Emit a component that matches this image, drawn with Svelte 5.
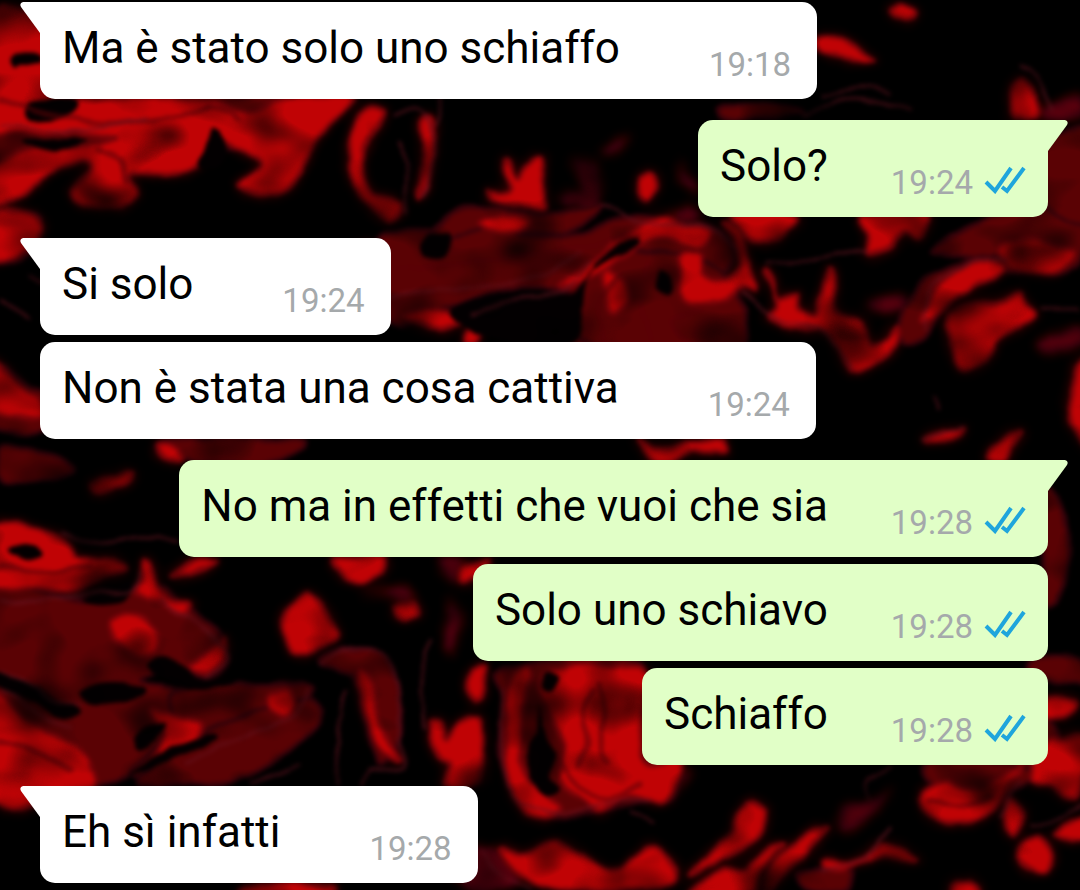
<script lang="ts">
  type Point = [number, number];
  type Message = { text: string; time: string; mine?: boolean };

  const groups: Message[][] = [
    [{ text: 'Ma è stato solo uno schiaffo', time: '19:18' }],
    [{ text: 'Solo?', time: '19:24', mine: true }],
    [
      { text: 'Si solo', time: '19:24' },
      { text: 'Non è stata una cosa cattiva', time: '19:24' },
    ],
    [
      { text: 'No ma in effetti che vuoi che sia', time: '19:28', mine: true },
      { text: 'Solo uno schiavo', time: '19:28', mine: true },
      { text: 'Schiaffo', time: '19:28', mine: true },
    ],
    [{ text: 'Eh sì infatti', time: '19:28' }],
  ];

  // wallpaper: points of each paint blob, smoothed into a curve below
  const deep = [
    '30,98 120,92 250,96 330,98 300,130 230,150 130,165 60,150 0,165 0,120',
    '380,240 430,232 500,228 560,238 640,215 700,225 735,250 720,290 735,330 700,350 570,350 580,300 560,290 500,290 440,312 390,322',
    '470,205 540,215 600,205 560,235 500,228 430,240 440,225',
    '590,345 575,300 600,265 640,250 720,270 740,350',
    '975,225 1050,190 1080,200 1080,262 1030,275 960,255 930,250',
    '1045,150 1090,130 1090,222 1046,205',
    '905,345 900,320 925,280 980,258 1010,262 960,290 930,330',
    '0,447 30,450 60,458 74,472 55,477 20,482 0,478',
    '160,440 300,440 270,462 185,460',
    '-10,600 80,600 150,585 190,610 222,640 225,665 205,676 170,668 140,680 180,690 250,692 310,690 290,715 220,735 170,760 110,782 -10,788',
    '180,690 300,685 310,700 270,745 190,770 130,775 170,730',
    '320,660 350,650 385,656 398,690 400,740 380,762 365,720 355,680',
    '505,668 640,664 645,760 680,770 670,800 640,802 600,812 550,815 515,790 500,755 503,700',
    '930,762 1030,764 1000,800 940,790',
    '1045,490 1066,525 1066,580 1045,605',
    '1030,660 1065,655 1090,665 1090,685 1035,678',
    '720,108 760,103 800,112 780,118 730,119',
    '-10,365 30,385 45,395 45,430 10,432 -10,420',
    '-10,225 20,213 40,220 30,240 35,250 10,262 -10,258',
    '960,700 1050,720 1045,765 960,750',
    '800,872 850,870 845,890 810,890',
    '575,780 620,700 650,690 650,770 600,810',
    '190,740 300,700 320,720 260,770 200,784 140,784',
  ];

  const faint = [
    '570,158 595,165 602,190 590,212 578,200 582,178',
    '600,150 620,140 630,134 622,148 606,156',
    '680,160 690,178 700,192 690,190 680,178',
    '560,195 580,190 582,200 566,206',
    '665,214 690,206 700,216 685,220',
    '1040,340 1080,328 1080,346 1050,350',
    '870,300 905,296 900,312 872,310',
    '450,600 460,620 452,655 446,640',
    '440,560 478,562 470,578 455,585',
    '360,596 398,588 416,600 410,612 390,596',
    '310,270 380,246 384,310 320,320',
    '840,810 870,800 892,790 872,815 845,832',
    '640,770 690,772 676,790 650,796',
    '1042,108 1080,96 1080,116 1046,120',
    '440,850 500,850 520,884 470,888',
  ];

  const bright = [
    '-10,18 38,16 60,60 70,98 130,98 205,100 250,112 285,98 352,98 335,118 312,142 302,168 288,190 270,195 245,190 240,183 262,164 235,148 218,140 208,158 180,172 132,172 138,194 118,206 95,207 73,195 90,172 84,162 50,172 25,192 -10,205 -10,170 28,150 85,146 115,140 80,134 20,133 -10,124',
    '-10,214 20,213 38,222 33,245 -10,260',
    '368,108 385,110 380,122 366,140 362,165 368,188 380,198 400,204 392,220 378,212 358,195 350,170 354,135',
    '421,122 432,120 433,150 428,180 420,196 424,160',
    '508,160 515,178 525,166 542,158 540,185 546,208 530,208 500,203 484,190 508,194 503,172',
    '640,178 652,173 658,185 650,198 640,194 637,186',
    '480,222 510,215 530,222 515,230 490,232',
    '892,12 902,5 914,12 906,20 894,18',
    '819,36 845,42 875,60 845,58 819,50',
    '1013,118 1012,95 1020,80 1030,85 1036,102 1034,118',
    '733,214 792,214 788,232 768,240 745,234',
    '865,214 928,214 918,236 905,230 890,246 868,256 868,235',
    '560,285 590,262 620,240 640,226 660,215 680,222 710,232 698,246 660,238 620,258 590,280',
    '680,258 700,254 705,275 725,282 740,262 735,240 722,224 740,230 748,260 756,290 740,285 725,302 700,304 682,295',
    '605,270 625,285 628,300 615,312 605,295',
    '765,270 772,278 778,298 795,294 800,310 815,316 820,300 826,276 832,270 834,305 845,316 862,322 870,344 885,340 898,328 896,345 880,362 858,370 842,360 838,345 820,330 790,328 768,315 778,304',
    '920,322 930,300 955,272 985,262 1005,266 990,280 965,292 945,310',
    '1000,250 1020,238 1050,242 1074,252 1066,266 1040,275 1015,268',
    '955,312 975,304 1000,302 1020,294 1026,305 1034,316 1015,330 995,342 985,362 962,370 952,350 950,328',
    '1074,372 1090,362 1090,444 1072,420',
    '928,436 965,428 950,440 926,442',
    '988,460 996,444 1022,430 1012,446 1004,460',
    '638,438 660,448 690,444 720,440 724,452 690,452 668,462 650,455',
    '1060,698 1076,704 1070,714 1046,716 1046,698',
    '1046,740 1062,738 1090,742 1078,790 1068,798 1050,786 1030,776',
    '430,312 460,320 445,328 425,326 405,316',
    '465,340 470,325 482,318 478,340',
    '155,442 172,446 180,462 162,456',
    '90,487 115,476 132,474 120,488 100,492',
    '-10,362 20,385 38,398 42,418 20,418 -10,408',
    '-10,526 35,528 68,542 78,558 110,560 125,570 100,578 70,592 30,588 -10,585',
    '145,560 152,565 157,590 175,600 190,602 186,614 165,604 145,600 135,592 143,580',
    '112,622 130,614 146,620 158,640 154,652 136,656 118,642',
    '170,575 200,560 215,562 190,572',
    '-10,695 25,718 60,738 88,762 84,790 -10,800',
    '280,690 290,690 294,704 284,716 270,708 268,696',
    '285,620 296,600 308,594 322,606 338,634 318,648 295,655 286,640',
    '335,560 380,558 382,572 362,584 345,578',
    '396,608 412,602 416,614 404,620',
    '358,672 370,680 378,715 392,745 400,762 378,745 366,712',
    '430,724 440,722 446,740 460,722 480,720 482,762 475,784 445,784 448,764 436,754',
    '472,672 484,668 482,695 474,700 468,688',
    '515,672 530,672 520,735 525,775 545,795 560,808 530,815 508,770 508,710',
    '545,672 640,668 644,700 640,740 650,765 680,762 665,802 630,795 600,812 580,800 560,780 565,745 552,720',
    '500,848 525,855 555,842 590,862 618,870 650,845 675,875 655,888 560,888 520,874',
    '738,812 755,804 766,812 760,835 740,850 700,870 688,874 718,848 734,830',
    '690,896 720,872 745,868 765,852 785,842 760,872 748,896',
    '762,886 775,862 800,840 828,826 812,845 790,870 772,890',
    '825,860 855,862 880,845 905,848 918,858 905,860 880,854 845,870 825,868',
    '925,790 945,782 965,792 1000,780 1020,765 1000,800 975,820 940,822 923,808',
    '1008,800 1020,806 1020,825 1012,838 1006,820',
    '1022,846 1040,838 1052,855 1046,872 1030,868 1020,856',
    '955,882 972,882 975,896 955,896',
    '1056,832 1090,816 1090,840 1066,838',
    '225,640 222,660 208,672 190,668 205,655 215,645',
    '150,710 200,722 190,745 155,758 165,735',
    '462,568 490,560 475,578 464,584',
    '250,886 330,884 325,896 250,896',
  ];

  const dark = [
    '12,60 22,54 40,55 40,62 22,66 14,70',
    '28,104 60,96 80,104 70,116 30,120',
    '22,142 60,138 90,140 60,149 25,148',
    '430,235 450,232 446,256 428,258 420,248',
    '590,275 640,245 630,240 600,258 572,292 520,292 470,300 450,320 520,345 575,340',
    '660,270 672,285 670,296 655,290',
    '10,552 35,546 42,556 25,562',
    '82,600 110,590 130,580 126,600 100,604',
    '80,690 110,684 145,688 140,698 100,704 82,700',
    '-10,672 25,680 50,696 80,712 60,718 30,700 -10,684',
    '145,664 165,656 185,668 200,678 235,682 200,690 165,680',
    '134,738 150,725 165,722 155,740 138,750',
    '190,740 210,736 215,742 195,750 150,768 130,778 150,758',
    '538,705 545,735 555,755 548,780 560,790 545,796 530,780 528,750 537,730',
    '545,672 560,678 552,690 542,684',
    '215,128 228,150 218,170 198,166 206,150',
  ];

  // darker folds inside the bright paint
  const folds = [
    '0,100 40,112 100,124 160,118 210,108',
    '205,108 232,112 240,120',
    '100,150 120,160 128,180',
    '0,566 40,572 90,566',
    '594,690 582,710 588,740 580,764',
    '600,684 606,712 600,740 606,764',
    '560,760 580,790 610,798 640,782',
    '0,740 40,752 70,770',
    '620,276 600,300 604,340',
    '650,260 640,300 650,340',
    '700,310 670,320 690,345',
    '930,800 960,806 990,796',
    '640,236 560,250 480,262 400,268',
  ];

  const veins = [
    '0,125 40,128 70,132 110,126 150,118',
    '440,98 440,118 436,128',
    '395,116 412,108 426,118 434,150 424,196',
    '398,140 408,170 404,214',
    '820,96 860,88 890,94',
    '800,118 845,100 880,102 910,108',
    '1020,66 1034,72 1046,95 1052,110',
    '765,262 800,262 840,252 868,254',
    '740,290 780,320 820,330 850,366',
    '1040,308 1080,308',
    '925,330 930,290 970,264 1010,258',
    '935,395 938,410',
    '920,440 965,426',
    '0,300 14,306 30,318',
    '28,276 40,286',
    '60,532 100,544 140,538 180,540',
    '0,600 50,600 100,592 132,590 142,570',
    '158,598 190,618 215,640 227,660 205,676',
    '0,672 25,680 50,700 80,706',
    '0,690 20,698 40,716 70,728',
    '185,764 230,742 290,718 310,690',
    '320,664 350,650 385,656 398,690 400,740 404,768 372,768 362,784',
    '345,690 338,730 336,784',
    '430,640 422,680 424,730',
    '248,784 300,764',
    '504,690 502,750 520,800 570,812 620,800 650,800',
    '870,800 866,780 890,766',
    '820,870 860,860 890,828',
    '1030,826 1060,818 1080,802',
    '480,850 500,875 530,888',
    '1000,818 1020,780',
    '630,812 655,824',
    '470,318 510,300 560,292 590,262',
    '380,300 430,290 480,286 540,276 580,252',
    '600,205 640,222 700,226 740,250',
  ];

  function curve(line: string, closed: boolean): string {
    const pts = line.split(' ').map((pair) => pair.split(',').map(Number) as Point);
    const n = pts.length;
    const at = (i: number) => (closed ? pts[(i + n) % n] : pts[Math.max(0, Math.min(n - 1, i))]);
    let d = `M${pts[0]}`;
    for (let i = 0; i < (closed ? n : n - 1); i++) {
      const [a, b, c, e] = [at(i - 1), at(i), at(i + 1), at(i + 2)];
      d += `C${b[0] + (c[0] - a[0]) / 6},${b[1] + (c[1] - a[1]) / 6} ${c[0] - (e[0] - b[0]) / 6},${c[1] - (e[1] - b[1]) / 6} ${c}`;
    }
    return closed ? d + 'Z' : d;
  }
</script>

<svg class="wallpaper" viewBox="0 0 1080 890" preserveAspectRatio="xMidYMin slice" aria-hidden="true">
  <defs>
    <filter id="paint" filterUnits="userSpaceOnUse" x="-40" y="-40" width="1160" height="970" color-interpolation-filters="sRGB">
      <feTurbulence type="fractalNoise" baseFrequency="0.03" numOctaves="2" seed="4" result="noise" />
      <feDisplacementMap in="SourceGraphic" in2="noise" scale="10" xChannelSelector="R" yChannelSelector="G" result="wavy" />
      <feGaussianBlur in="wavy" stdDeviation="2" result="soft" />
      <feTurbulence type="fractalNoise" baseFrequency="0.016 0.022" numOctaves="2" seed="9" result="cloud" />
      <feColorMatrix in="cloud" type="matrix" values="1.8 0 0 0 0  1.8 0 0 0 0  1.8 0 0 0 0  0 0 0 0 1" result="shade" />
      <feBlend in="soft" in2="shade" mode="multiply" />
    </filter>
    <filter id="haze" filterUnits="userSpaceOnUse" x="-40" y="-40" width="1160" height="970">
      <feGaussianBlur stdDeviation="5" />
    </filter>
  </defs>
  <g filter="url(#paint)">
    <rect x="-60" y="-60" width="1200" height="1010" fill="#000" />
    <g filter="url(#haze)">
      {#each faint as line}<path class="faint" d={curve(line, true)} />{/each}
      {#each bright as line}<path class="glow" d={curve(line, true)} />{/each}
    </g>
    {#each deep as line}<path class="deep" d={curve(line, true)} />{/each}
    {#each bright as line}<path class="bright" d={curve(line, true)} />{/each}
    {#each dark as line}<path class="dark" d={curve(line, true)} />{/each}
    {#each folds as line}<path class="fold" d={curve(line, false)} />{/each}
    {#each veins as line}<path class="vein" d={curve(line, false)} />{/each}
  </g>
</svg>

<main class="chat">
  {#each groups as group}
    <section class="group" class:mine={group[0].mine}>
      {#each group as message, i}
        <article class="bubble">
          {#if i === 0}
            <svg class="tail" viewBox="0 0 20 32" aria-hidden="true">
              <path d="M20 0H3Q-1 1 1 5L20 31Z" />
            </svg>
          {/if}
          <p>{message.text}</p>
          <footer>
            <time>{message.time}</time>
            {#if message.mine}
              <svg class="ticks" viewBox="0 0 42 28" role="img" aria-label="Read">
                <path d="M2 16L11 25L27 2M18 21L23 25L40 2" />
              </svg>
            {/if}
          </footer>
        </article>
      {/each}
    </section>
  {/each}
</main>

<style>
  :global(body) { margin: 0; background: #000; overflow-x: hidden; }
  .wallpaper { position: fixed; inset: 0; width: 100%; height: 100%; }
  .faint { fill: #5c0508; }
  .glow { fill: #3c0204; stroke: #3c0204; stroke-width: 6; }
  .deep { fill: #5a0204; stroke: #38020a; stroke-width: 4; }
  .bright { fill: #c00305; stroke: #7c0308; stroke-width: 4; }
  .dark { fill: #030001; }
  .fold { fill: none; stroke: #5a0206; stroke-width: 5; stroke-linecap: round; opacity: .6; }
  .vein { fill: none; stroke: #66141f; stroke-width: 3; opacity: .6; }

  .chat { position: relative; display: flex; flex-direction: column; gap: 21px; padding: 2px 32px 8px 40px; font-family: Roboto, "Liberation Sans", sans-serif; }
  .group { display: flex; flex-direction: column; align-items: flex-start; gap: 7px; }
  .group.mine { align-items: flex-end; }
  .bubble { position: relative; display: flex; align-items: flex-end; gap: 89px; box-sizing: border-box; min-height: 97px; padding: 0 26px 0 22px; border-radius: 15px; background: #fff; color: #000; }
  .mine .bubble { gap: 63px; padding-right: 22px; background: #e1ffc7; }
  .bubble:first-child { border-top-left-radius: 0; }
  .mine .bubble:first-child { border-top-left-radius: 15px; border-top-right-radius: 0; }
  .tail { position: absolute; top: 0; right: 100%; width: 20px; height: 32px; fill: #fff; }
  .mine .tail { right: auto; left: 100%; fill: #e1ffc7; transform: scaleX(-1); }
  p { margin: 0; padding: 20px 0 25px; font-size: 44px; line-height: 52px; }
  footer { display: flex; align-items: center; gap: 11px; padding-bottom: 14px; }
  time { color: #a5a9ab; font-size: 33px; line-height: 40px; }
  .ticks { width: 42px; height: 28px; margin-bottom: 6px; fill: none; stroke: #1fa5dc; stroke-width: 4; }
</style>
